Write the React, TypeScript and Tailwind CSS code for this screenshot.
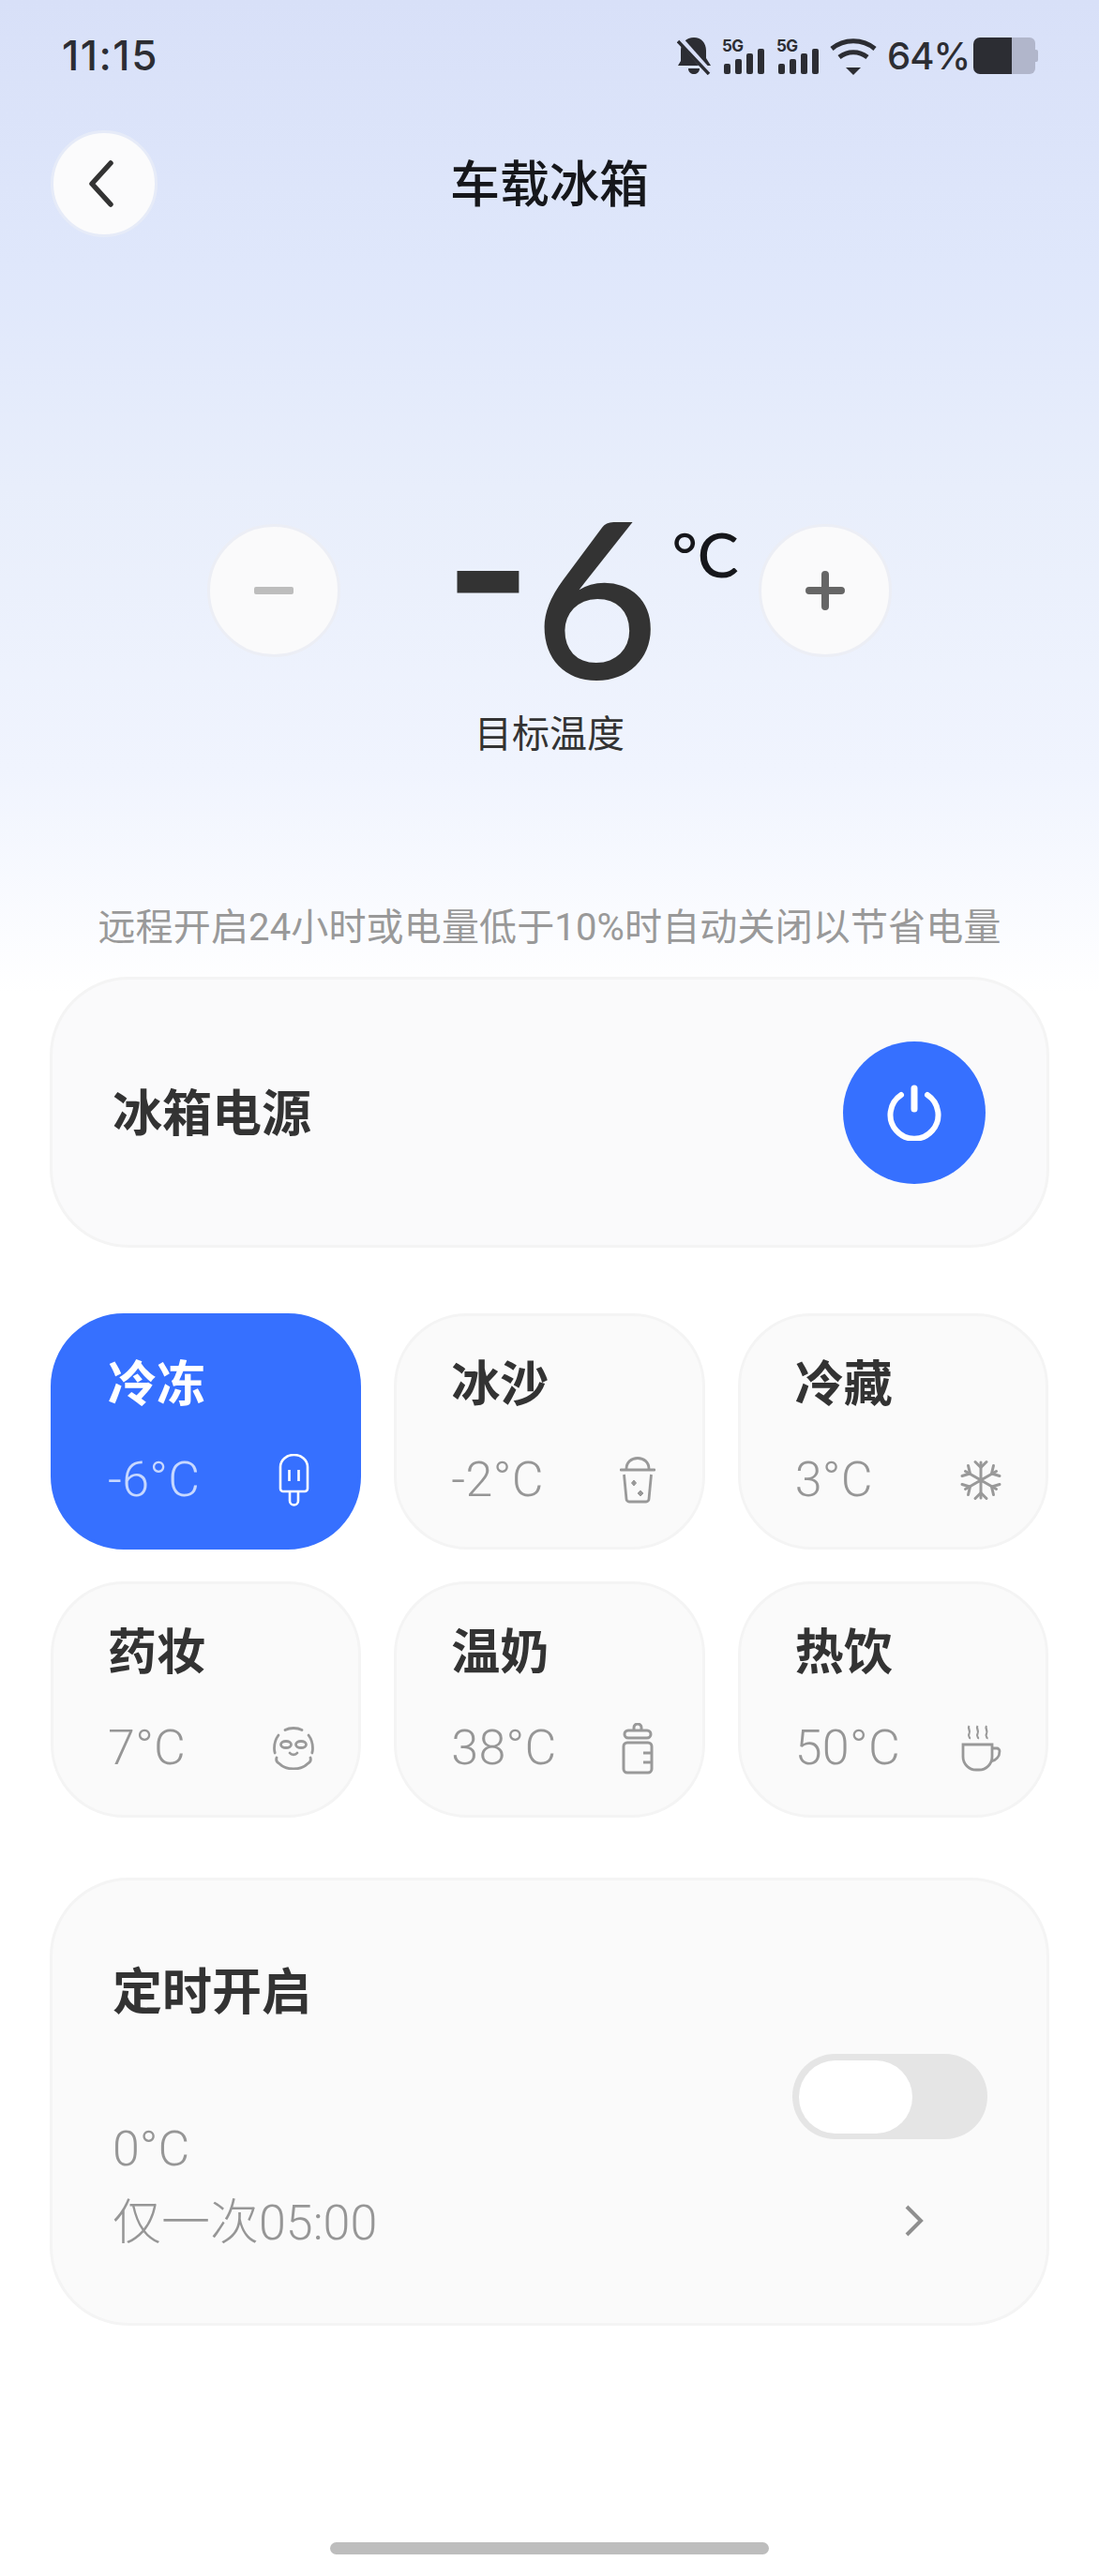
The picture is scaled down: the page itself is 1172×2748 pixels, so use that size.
import React from "react";

const g = "#999999";

function Signal() {
  return (
    <svg width="46" height="39" viewBox="0 0 46 39" className="block">
      <text x="0" y="15" fontSize="17" fontWeight="700" fill="#2c2d33" fontFamily="Inter, sans-serif" letterSpacing="-0.5">5G</text>
      <rect x="2" y="28" width="7" height="11" rx="2" fill="#2c2d33" />
      <rect x="14" y="23" width="7" height="16" rx="2" fill="#2c2d33" />
      <rect x="26" y="17" width="7" height="22" rx="2" fill="#2c2d33" />
      <rect x="38" y="12" width="7" height="27" rx="2" fill="#2c2d33" />
    </svg>
  );
}

function Bell() {
  return (
    <svg width="37" height="40" viewBox="0 0 37 40" className="block">
      <path d="M18 0c8 0 13 6 13 14v8l5 8H1l3-5 V14C4 6 10 0 18 0z" fill="#2c2d33" />
      <path d="M12 33h12c0 4-3 6-6 6s-6-2-6-6z" fill="#2c2d33" />
      <path d="M3 2l32 36" stroke="#d8dff8" strokeWidth="7" />
      <path d="M1 4l33 35" stroke="#2c2d33" strokeWidth="3.4" />
    </svg>
  );
}

function Wifi() {
  return (
    <svg width="50" height="40" viewBox="0 0 50 40" className="block">
      <path d="M2 12C15 1 35 1 48 12" fill="none" stroke="#2c2d33" strokeWidth="5" />
      <path d="M10 21c9-7 21-7 30 0" fill="none" stroke="#2c2d33" strokeWidth="5" />
      <path d="M17 32h16l-8 8z" fill="#2c2d33" />
    </svg>
  );
}

function Battery() {
  return (
    <svg width="69" height="39" viewBox="0 0 69 39" className="block">
      <path d="M41 0h19a6 6 0 0 1 6 6v27a6 6 0 0 1-6 6H41z" fill="#b1b6cb" />
      <path d="M7 0h34v39H7a7 7 0 0 1-7-7V7a7 7 0 0 1 7-7z" fill="#2c2d33" />
      <path d="M66 13h1a2 2 0 0 1 2 2v9a2 2 0 0 1-2 2h-1z" fill="#b1b6cb" />
    </svg>
  );
}

function Popsicle() {
  return (
    <svg width="33" height="56" viewBox="0 0 33 56" fill="none" stroke="#ffffff" strokeWidth="2.6" className="block">
      <path d="M2 14a14.500 13 0 0 1 29 0v23a3 3 0 0 1-3 3H5a3 3 0 0 1-3-3z" />
      <path d="M11.500 17v12M21.500 17v12" />
      <path d="M12 40v10a4.500 4.500 0 0 0 9 0V40" />
    </svg>
  );
}

function Cup() {
  return (
    <svg width="38" height="50" viewBox="0 0 38 50" fill="none" stroke={g} strokeWidth="2.8" className="block">
      <path d="M1 14h36" strokeLinecap="round" />
      <path d="M7 13C7 6 12 1.500 19 1.500S31 6 31 13" />
      <path d="M4.500 19l2.500 26a3 3 0 0 0 3 3h18a3 3 0 0 0 3-3l2.500-26" />
      <path d="M15 25l2.500 3-2.500 3-2.500-3zM22 36l3 3-3 3-3-3z" fill={g} strokeWidth="1" />
    </svg>
  );
}

function Snow() {
  return (
    <svg width="44" height="44" viewBox="0 0 44 44" fill="none" stroke={g} strokeWidth="3" strokeLinecap="round" className="block">
      <path d="M22 3v38M5.500 12.500l33 19M38.500 12.500l-33 19" />
      <path d="M16 2.500l6 6 6-6M16 41.500l6-6 6 6" />
      <path d="M2 17.500l8.500-2.500-2-8.500M42 17.500l-8.500-2.500 2-8.500M2 26.500l8.500 2.500-2 8.500M42 26.500l-8.500 2.500 2 8.500" />
    </svg>
  );
}

function Mask() {
  return (
    <svg width="44" height="46" viewBox="0 0 44 46" fill="none" stroke={g} strokeWidth="2.8" strokeLinecap="round" className="block">
      <path d="M13 3.500C18 .8 26 .8 31 3.500" />
      <path d="M6 9C3 13 1.500 18 1.500 23c0 2 .2 3.500 .7 5" />
      <path d="M38 9c3 4 4.500 9 4.500 14 0 2-.2 3.500-.7 5" />
      <path d="M4 33c-1 3 0 5 3 6.500C11 43.500 16 45 22 45s11-1.500 15-5.500c3-1.500 4-3.500 3-6.500" />
      <ellipse cx="14" cy="19" rx="5.500" ry="3.500" />
      <ellipse cx="30" cy="19" rx="5.500" ry="3.500" />
      <path d="M18 28c2 2.500 6 2.500 8 0" />
    </svg>
  );
}

function Bottle() {
  return (
    <svg width="34" height="55" viewBox="0 0 34 55" fill="none" stroke={g} strokeWidth="3" className="block">
      <path d="M13 8V5a4 4 0 0 1 8 0v3" />
      <rect x="3" y="8" width="28" height="8" rx="4" />
      <path d="M6 21h22a4 4 0 0 1 4 4v24a4 4 0 0 1-4 4H6a4 4 0 0 1-4-4V25a4 4 0 0 1 4-4z" />
      <path d="M32 32h-9M32 42h-9" />
    </svg>
  );
}

function Coffee() {
  return (
    <svg width="43" height="50" viewBox="0 0 43 50" fill="none" stroke={g} strokeWidth="2.8" className="block">
      <path d="M2 21h31v13a14 14 0 0 1-14 14h-3A14 14 0 0 1 2 34z" />
      <path d="M33 25h5a3 3 0 0 1 3 3c0 6-4 10-9 11" />
      <path d="M8.500 1c-2 3 2 5 0 8.500s1.500 3 .5 5.500M17.500 1c-2 3 2 5 0 8.500s1.500 3 .5 5.500M27 1c-2 3 2 5 0 8.500s1.500 3 .5 5.500" strokeWidth="2.200" />
    </svg>
  );
}

const modes: { name: string; temp: string; icon: React.ReactNode; active?: boolean }[] = [
  { name: "冷冻", temp: "-6°C", icon: <Popsicle />, active: true },
  { name: "冰沙", temp: "-2°C", icon: <Cup /> },
  { name: "冷藏", temp: "3°C", icon: <Snow /> },
  { name: "药妆", temp: "7°C", icon: <Mask /> },
  { name: "温奶", temp: "38°C", icon: <Bottle /> },
  { name: "热饮", temp: "50°C", icon: <Coffee /> },
];

function ModeCard({ name, temp, icon, active }: (typeof modes)[number]) {
  return (
    <div
      className={
        active
          ? "h-[252px] rounded-[78px] border-[3px] border-[#3670ff] bg-[#3670ff] pt-[36px] pl-[58px]"
          : "h-[252px] rounded-[78px] border-[3px] border-[#f4f4f4] bg-[#fafafa] pt-[36px] pl-[58px]"
      }
    >
      <div className={active ? "text-[52px] leading-[70px] font-bold text-white" : "text-[52px] leading-[70px] font-bold text-[#333333]"}>
        {name}
      </div>
      <div className="mt-[39px] flex h-[60px] items-center justify-between pr-[47px]">
        <span className={active ? "font-['Roboto',sans-serif] text-[52px] leading-[60px] font-light tracking-[0.3px] text-[#c7d8ff]" : "font-['Roboto',sans-serif] text-[52px] leading-[60px] font-light tracking-[0.3px] text-[#969696]"}>
          {temp}
        </span>
        <span className="flex h-[60px] w-[44px] items-center justify-center">{icon}</span>
      </div>
    </div>
  );
}

export default function App() {
  return (
    <div className="relative h-[2748px] w-[1172px] overflow-hidden bg-[linear-gradient(180deg,#d8e0f8_0px,#dfe7fb_280px,#e8eefb_520px,#f0f4fe_820px,#ffffff_1060px)] font-['Lato','Noto_Sans_CJK_SC',sans-serif] text-[#333333]">
      {/* status bar */}
      <div className="mt-[40px] flex h-[39px] items-center justify-between pr-[65px] pl-[66px]">
        <span className="font-['Inter',sans-serif] text-[44px] leading-[39px] font-medium tracking-[1.5px] text-[#2c2d33]">11:15</span>
        <div className="flex items-center">
          <Bell />
          <span className="ml-[11px]"><Signal /></span>
          <span className="ml-[12px]"><Signal /></span>
          <span className="ml-[11px]"><Wifi /></span>
          <span className="ml-[11px] w-[82px] font-['Inter',sans-serif] text-[40px] leading-[39px] font-medium tracking-[-1px] whitespace-nowrap text-[#2c2d33]">64%</span>
          <span className="ml-[10px]"><Battery /></span>
        </div>
      </div>

      {/* header */}
      <div className="mt-[60px] grid h-[114px] grid-cols-[114px_1fr_114px] items-center px-[54px]">
        <button className="flex h-[114px] w-[114px] items-center justify-center rounded-full border-[3px] border-[#e6ebf8] bg-[#fbfbfc]">
          <svg width="30" height="50" viewBox="0 0 30 50" fill="none" stroke="#333333" strokeWidth="5.500" strokeLinecap="round" strokeLinejoin="round" className="mr-[6px]">
            <path d="M25 3L5 25l20 22" />
          </svg>
        </button>
        <div className="text-center text-[53px] leading-[70px] font-medium text-[#16171b]">车载冰箱</div>
        <div />
      </div>

      {/* target temperature */}
      <div className="mx-auto mt-[306px] flex h-[142px] w-[730px] items-center justify-between">
        <button className="flex h-[142px] w-[142px] items-center justify-center rounded-full border-[3px] border-[#eceef5] bg-[#fafafb]">
          <span className="block h-[8px] w-[42px] rounded-[2px] bg-[#bdbdbd]" />
        </button>
        <div className="flex h-[142px] flex-1 items-start pl-[109px]">
          <span className="-mt-[10px] text-[232px] leading-[170px] font-medium whitespace-nowrap text-[#333333]">
            <span className="relative -top-[25px] text-[260px] leading-[0] font-semibold">-</span>6
          </span>
          <span className="mt-[-3px] ml-[13px] text-[66px] leading-[70px] font-medium whitespace-nowrap text-[#16171b]">°C</span>
        </div>
        <button className="flex h-[142px] w-[142px] items-center justify-center rounded-full border-[3px] border-[#eceef5] bg-[#fafafb]">
          <svg width="42" height="42" viewBox="0 0 42 42" fill="none" stroke="#666666" strokeWidth="8" strokeLinecap="round">
            <path d="M21 4v34M4 21h34" />
          </svg>
        </button>
      </div>
      <div className="mt-[53px] text-center text-[40px] leading-[56px] text-[#333333]">目标温度</div>

      <div className="mt-[152px] text-center font-['Roboto','Noto_Sans_CJK_SC',sans-serif] text-[40px] leading-[56px] tracking-[0.15px] whitespace-nowrap text-[#999999]">
        远程开启24小时或电量低于10%时自动关闭以节省电量
      </div>

      <div className="mx-[53px] mt-[24px] flex h-[289px] items-center justify-between rounded-[84px] border-[3px] border-[#f4f4f4] bg-[#fafafb] pr-[65px] pl-[64px]">
        <span className="text-[53px] leading-[70px] font-bold text-[#333333]">冰箱电源</span>
        <span className="flex h-[152px] w-[152px] items-center justify-center rounded-full bg-[#3670ff]">
          <svg width="58" height="60" viewBox="0 0 58 60" fill="none" stroke="#ffffff" strokeWidth="6" strokeLinecap="round">
            <path d="M29 4v22" strokeWidth="7" />
            <path d="M15 11a25.500 25.500 0 1 0 28 0" />
          </svg>
        </span>
      </div>

      <div className="mx-[54px] mt-[70px] grid grid-cols-3 gap-x-[35px] gap-y-[34px]">
        {modes.map((m) => (
          <ModeCard key={m.name} {...m} />
        ))}
      </div>

      <div className="mx-[53px] mt-[64px] h-[478px] rounded-[84px] border-[3px] border-[#f4f4f4] bg-[#fafafa] pt-[83px] pl-[64px]">
        <div className="text-[53px] leading-[70px] font-bold text-[#333333]">定时开启</div>
        <div className="flex justify-between">
          <div className="pt-[94px] font-['Roboto','Noto_Sans_CJK_SC',sans-serif] text-[52px] leading-[79px] font-light text-[#969696]">
            <div>0°C</div>
            <div>仅一次05:00</div>
          </div>
          <div className="flex flex-col items-end pt-[32px] pr-[63px]">
            <div className="flex h-[91px] w-[208px] items-center rounded-full bg-[#e5e5e5] pl-[7px]">
              <span className="block h-[78px] w-[121px] rounded-full bg-white" />
            </div>
            <svg width="20" height="34" viewBox="0 0 20 34" fill="none" stroke="#8f8f8f" strokeWidth="4" className="mt-[70px] mr-[68px] block">
              <path d="M2 2l15 15L2 32" />
            </svg>
          </div>
        </div>
      </div>

      <div className="mx-auto mt-[231px] h-[13px] w-[468px] rounded-full bg-[#bdbdbd]" />
    </div>
  );
}
